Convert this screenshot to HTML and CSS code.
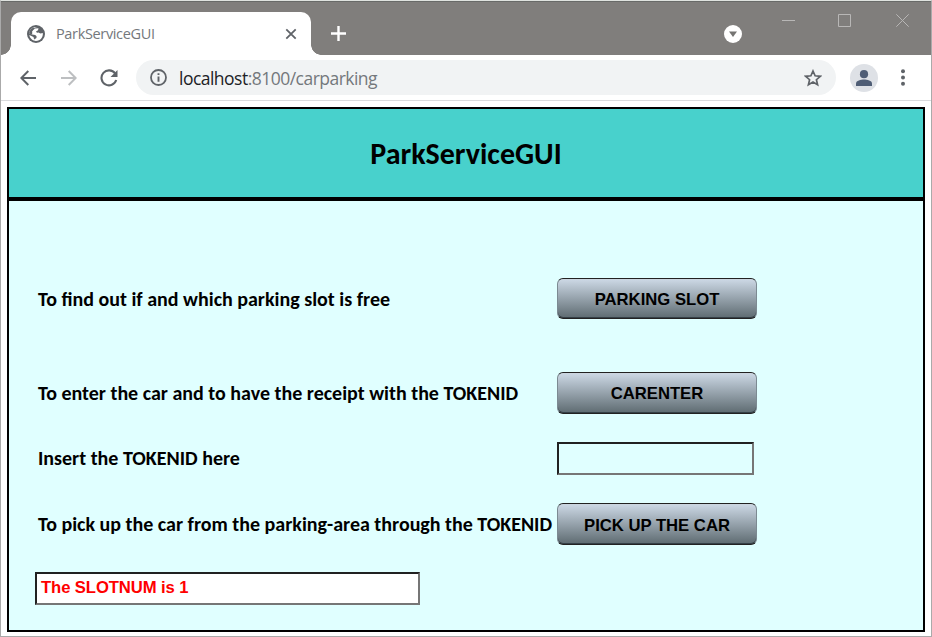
FILE: index.html
```html
<!DOCTYPE html>
<html lang="en">
<head>
<meta charset="utf-8">
<title>ParkServiceGUI</title>
<link rel="stylesheet" href="styles.css">
</head>
<body>
<div class="window">
  <div class="titlebar">
    <div class="tab">
      <svg class="globe" width="18" height="18" viewBox="0 0 18 18"><circle cx="9" cy="9" r="9" fill="#5f6368"/><path d="M10.5 2.2C8 2 7.2 3 7.3 4.3 6.200 4.500 5.500 5 5.600 6.200L8.500 6.500C9.200 7.500 10 8 11.500 7.600 12.500 8.700 14 8.500 15.800 8 16.300 12 13.500 16 9 16L7.300 15.700V14C9 13.800 9.800 13 9.600 11.600 9.300 10.100 7.500 9.600 5.200 9.500L2.100 8.500C2.300 4.500 6 1.300 10.500 2.200Z" fill="#fff"/><path d="M7 3.500 10.700 2 13.500 3.500 15.500 7 14 7.500C13.300 6 12 6.300 11 6.500 9.500 6.500 9.300 5.400 7.500 5.500Z" fill="#5f6368"/><path d="M2 8.500C2.200 5.500 4 3.500 6.500 2.500L8 4.300 5.500 6.500 5 9.400Z" fill="#5f6368"/><path d="M8 3.500 11.500 3.200 11 5.300 9 6.500 10 8.500 7 8.800 5 7 6 5.200Z" fill="#fff"/><path d="M2.300 10 6.500 12 7.500 15.700C4.500 15 2.700 12.700 2.300 10Z" fill="#fff"/></svg>
      <span class="tab-title">ParkServiceGUI</span>
      <svg class="tab-close" width="12" height="12" viewBox="0 0 12 12"><path d="M1.300 1.300 10.700 10.700M10.700 1.300 1.300 10.700" stroke="#5f6368" stroke-width="1.800"/></svg>
    </div>
    <svg class="new-tab" width="15" height="15" viewBox="0 0 15 15"><path d="M7.500 0V15M0 7.500H15" stroke="#fff" stroke-width="2.400"/></svg>
    <div class="controls">
      <svg class="search-tabs" width="18" height="18" viewBox="0 0 18 18"><circle cx="9" cy="9" r="9" fill="#fff"/><path d="M5 6.500H13L9 12Z" fill="#757472"/></svg>
      <svg width="13" height="13" viewBox="0 0 13 13"><path d="M0 6.500H13" stroke="#b8b7b6"/></svg>
      <svg class="maximize" width="13" height="13" viewBox="0 0 13 13"><path d="M.5.5H12.500V12.500H.5Z" stroke="#b8b7b6" fill="none"/></svg>
      <svg width="13" height="13" viewBox="0 0 13 13"><path d="M.3.3 12.700 12.700M12.700.3.3 12.700" stroke="#b8b7b6"/></svg>
    </div>
  </div>
  <div class="toolbar">
    <svg width="16" height="16" viewBox="0 0 16 16"><path d="M16 8H1.500M8.300 1 1.300 8 8.300 15" stroke="#5f6368" stroke-width="2" fill="none"/></svg>
    <svg class="forward" width="16" height="16" viewBox="0 0 16 16"><path d="M0 8H14.500M7.700 1 14.700 8 7.700 15" stroke="#bdbfc1" stroke-width="2" fill="none"/></svg>
    <svg class="reload" width="18" height="18" viewBox="0 0 18 18"><path d="M15.100 4.500A7.500 7.500 0 1 0 16.200 11" stroke="#5f6368" stroke-width="2.100" fill="none"/><path d="M17.500 1V8H10.500Z" fill="#5f6368"/></svg>
    <div class="address">
      <svg width="17" height="17" viewBox="0 0 17 17"><circle cx="8.500" cy="8.500" r="7.500" stroke="#5f6368" stroke-width="1.800" fill="none"/><path d="M8.500 7.500V12.700M8.500 4.200V6.100" stroke="#5f6368" stroke-width="1.900"/></svg>
      <span class="url"><span class="host">localhost</span>:8100/carparking</span>
      <svg class="star" width="18" height="18" viewBox="0 0 18 18"><path d="M9 2 11.100 6.800 16.300 7.300 12.400 10.700 13.600 15.800 9 13.100 4.400 15.800 5.600 10.700 1.700 7.300 6.900 6.800Z" stroke="#5f6368" stroke-width="1.700" fill="none"/></svg>
    </div>
    <svg class="avatar" width="28" height="28" viewBox="0 0 28 28"><circle cx="14" cy="14" r="14" fill="#dee1e6"/><circle cx="14" cy="10.200" r="4.100" fill="#4f5d75"/><path d="M6 22V19.500C6 16.500 11 15.500 14 15.500S22 16.500 22 19.500V22Z" fill="#4f5d75"/></svg>
    <svg class="more" width="4" height="17" viewBox="0 0 4 17"><g fill="#5f6368"><circle cx="2" cy="2.200" r="2"/><circle cx="2" cy="8.500" r="2"/><circle cx="2" cy="14.800" r="2"/></g></svg>
  </div>
  <main class="page">
    <h1 class="page-title">ParkServiceGUI</h1>
    <form class="panel">
      <div class="row row-slot"><label>To find out if and which parking slot is free</label><button type="button">PARKING SLOT</button></div>
      <div class="row row-enter"><label>To enter the car and to have the receipt with the TOKENID</label><button type="button">CARENTER</button></div>
      <div class="row row-token"><label for="token">Insert the TOKENID here</label><input class="token" id="token" type="text"></div>
      <div class="row row-pickup"><label>To pick up the car from the parking-area through the TOKENID</label><button type="button">PICK UP THE CAR</button></div>
      <div class="result">The SLOTNUM is 1</div>
    </form>
  </main>
</div>
</body>
</html>
```
FILE: styles.css
```css
* { box-sizing: border-box; }
body { margin: 0; background: #fff; }
svg { display: block; flex: none; }
.window {
  width: 932px; height: 637px; overflow: hidden;
  border: 1px solid #aaa; border-top-color: #dfe3df;
  display: flex; flex-direction: column;
}
.titlebar {
  height: 54px; flex: none; display: flex; padding: 10px 22px 0 10px;
  background: #807e7c; border-top: 1px solid #686a68;
}
.tab {
  position: relative; width: 300px; height: 43px; padding: 0 14px 0 16px;
  display: flex; align-items: center; background: #fff;
  border-radius: 10px 10px 0 0; font-family: "Open Sans", sans-serif;
}
.tab::before, .tab::after {
  content: ""; position: absolute; bottom: 0; width: 10px; height: 10px;
}
.tab::before { left: -10px; background: radial-gradient(circle at 0 0, transparent 9.5px, #fff 10px); }
.tab::after { right: -10px; background: radial-gradient(circle at 100% 0, transparent 9.5px, #fff 10px); }
.tab-title { margin-left: 11px; font-size: 14.5px; letter-spacing: -.35px; color: #74787c; white-space: nowrap; }
.tab-close { margin-left: auto; }
.new-tab { margin: 14px 0 0 20px; }
.controls { margin-left: auto; display: flex; gap: 44px; padding-top: 2px; }
.search-tabs { margin: 11px -4px 0 0; }
.maximize { margin: 0 1px 0 -1px; }
.toolbar {
  height: 46px; flex: none; display: flex; align-items: center;
  padding: 0 26px 0 19px; border-bottom: 1px solid #d9dadd;
}
.forward { margin-left: 25px; }
.reload { margin-left: 23px; }
.address {
  margin-left: 18px; width: 700px; height: 35px; border-radius: 18px; background: #f1f3f4;
  display: flex; align-items: center; padding: 0 14px;
  font-family: "Open Sans", sans-serif;
}
.url { margin-left: 12px; font-size: 17.5px; letter-spacing: -.52px; color: #74787c; white-space: nowrap; }
.host { color: #202124; }
.star { margin-left: auto; }
.avatar { margin-left: 14px; }
.more { margin-left: auto; }
.page {
  margin: 6px 6px 4px; flex: 1; display: flex; flex-direction: column;
  border: 2px solid #000; background: #e0ffff;
  font-family: Carlito, Calibri, Lato, sans-serif; font-weight: 700; color: #000;
}
.page-title {
  margin: 0; height: 92px; background: #48d1cc; border-bottom: 4px solid #000;
  font-size: 30px; line-height: 90px; text-align: center;
}
.panel { padding: 77px 0 0 26px; }
.row { display: grid; grid-template-columns: 519px 200px; align-items: center; padding-left: 3px; }
.row label { font-size: 20px; white-space: nowrap; }
.row-slot { height: 41px; margin-bottom: 53px; }
.row-enter { height: 42px; margin-bottom: 28px; }
.row-token { height: 33px; margin-bottom: 28px; }
.row-token label { padding-bottom: 2px; }
.row-pickup { height: 42px; margin-bottom: 27px; }
button {
  width: 200px; height: 100%; padding: 2px 0 0; border: 1px solid; border-color: #222 #7c8a92 #222;
  border-radius: 6px; box-shadow: inset 0 -1px #354047, inset 0 1px #cbd5df;
  background: linear-gradient(#cdd9e6, #5e6b71);
  font: 700 16.67px "Liberation Sans", Arial, sans-serif; color: #000;
}
.row-pickup button { padding-top: 3px; }
.token {
  width: 197px; height: 33px; border: 2px solid; border-color: #212121 #767676 #767676 #212121;
  background: transparent;
}
.result {
  width: 385px; height: 33px; padding-left: 4px; border: 2px solid;
  border-color: #212121 #767676 #767676 #212121; background: #fff;
  font: 700 16.67px/28px "Liberation Sans", Arial, sans-serif; letter-spacing: -.1px; color: #f00;
}
```
